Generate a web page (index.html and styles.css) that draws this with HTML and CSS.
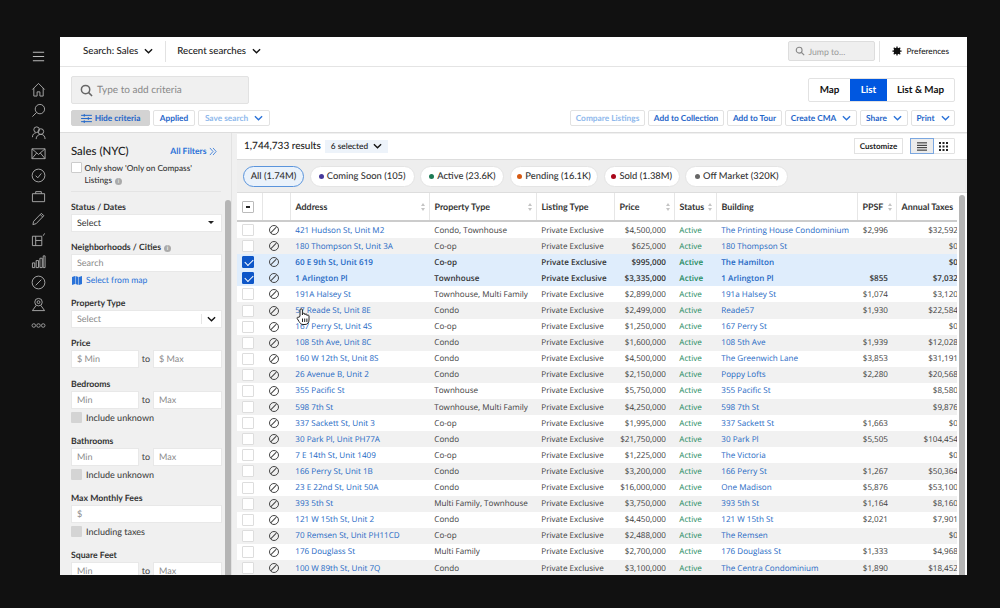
FILE: index.html
```html
<!DOCTYPE html>
<html lang="en">
<head>
<meta charset="utf-8">
<title>Search: Sales</title>
<link rel="stylesheet" href="styles.css">
</head>
<body>
<nav class="rail">
  <svg class="rail-ico menu" viewBox="0 0 16 16"><path d="M2 3.500h12M2 8h12M2 12.500h12"/></svg>
  <svg class="rail-ico home" viewBox="0 0 16 16"><path d="M1.500 8 8 1.500 14.500 8M3 6.500V15h3.500v-4.500h3V15H13V6.500"/></svg>
  <svg class="rail-ico" viewBox="0 0 16 16"><circle cx="9.500" cy="6.500" r="5"/><path d="M6 10 1.500 14.500"/></svg>
  <svg class="rail-ico" viewBox="0 0 16 16"><circle cx="6" cy="5" r="3"/><circle cx="10.500" cy="7" r="3"/><path d="M1.500 13c0-3 2-4.500 3.500-4.500M5.500 15c0-3 2.200-5 5-5s4.500 2 4.500 5"/></svg>
  <svg class="rail-ico" viewBox="0 0 16 16"><path d="M1 3h14v10.500H1zM1 3l7 6 7-6M1 13.500l5-6M15 13.500l-5-6"/></svg>
  <svg class="rail-ico" viewBox="0 0 16 16"><circle cx="8" cy="8" r="6.800"/><path d="M5 8.200 7.200 10.500 11 5.800"/></svg>
  <svg class="rail-ico" viewBox="0 0 16 16"><path d="M1.500 5h13v8.500h-13zM5 5V2.800h6V5"/></svg>
  <svg class="rail-ico" viewBox="0 0 16 16"><path d="M2 14.500 2.800 11 11 2.500l2.700 2.500L5.500 13.500zM9.800 3.800l2.700 2.600"/></svg>
  <svg class="rail-ico" viewBox="0 0 16 16"><path d="M1.500 4.500h10v10h-10zM5 4.500v10M5 9h6.500M13 4l1.500-2.500"/></svg>
  <svg class="rail-ico" viewBox="0 0 16 16"><path d="M1.500 9.500h2.500v5H1.500zM5.500 7H8v7.500H5.500zM9.500 4.500H12v10H9.500zM13 2h2v12.500h-2z"/></svg>
  <svg class="rail-ico" viewBox="0 0 16 16"><circle cx="8" cy="8" r="6.800"/><path d="M5 11 11 5"/></svg>
  <svg class="rail-ico" viewBox="0 0 16 16"><circle cx="8" cy="5.500" r="4"/><circle cx="8" cy="5.500" r="1.500"/><path d="M5.500 9 1.500 14.500h13L10.500 9"/></svg>
  <svg class="rail-ico dots" viewBox="0 0 16 16"><circle cx="3" cy="8" r="1.900"/><circle cx="8" cy="8" r="1.900"/><circle cx="13" cy="8" r="1.900"/></svg>
</nav>

<div class="app">
  <header class="topbar">
    <button class="top-menu">Search: Sales <svg class="chev" viewBox="0 0 10 6"><path d="M1 1l4 4 4-4"/></svg></button>
    <span class="top-sep"></span>
    <button class="top-menu">Recent searches <svg class="chev" viewBox="0 0 10 6"><path d="M1 1l4 4 4-4"/></svg></button>
    <span class="spacer"></span>
    <div class="jump"><svg class="jump-ico" viewBox="0 0 12 12"><circle cx="5" cy="5" r="3.500"/><path d="M7.500 7.500 11 11"/></svg>Jump to...</div>
    <span class="top-sep narrow"></span>
    <button class="prefs"><svg class="gear" viewBox="0 0 12 12"><circle cx="6" cy="6" r="3.200"/><path d="M6 .5v11M.5 6h11M2.100 2.100l7.800 7.800M9.900 2.100l-7.800 7.800"/></svg>Preferences</button>
  </header>

  <section class="criteria">
    <div class="crit-left">
      <div class="crit-search"><svg class="crit-ico" viewBox="0 0 14 14"><circle cx="6" cy="6" r="4.500"/><path d="M9.300 9.300 13 13"/></svg>Type to add criteria</div>
      <div class="crit-actions">
        <button class="btn hide"><svg class="sliders" viewBox="0 0 12 10"><path d="M0 1.500h12M0 5h12M0 8.500h12M3.500 0v3M8 3.500v3M3.500 7v3"/></svg>Hide criteria</button>
        <button class="btn b-applied">Applied</button>
        <button class="btn off wide">Save search <svg class="chev blue" viewBox="0 0 10 6"><path d="M1 1l4 4 4-4"/></svg></button>
      </div>
    </div>
    <div class="crit-right">
      <div class="views">
        <span class="view v-map">Map</span>
        <span class="view v-list">List</span>
        <span class="view v-both">List &amp; Map</span>
      </div>
      <div class="crit-actions tools">
        <button class="btn off b-compare">Compare Listings</button>
        <button class="btn b-coll">Add to Collection</button>
        <button class="btn b-tour">Add to Tour</button>
        <button class="btn b-cma">Create CMA <svg class="chev blue" viewBox="0 0 10 6"><path d="M1 1l4 4 4-4"/></svg></button>
        <button class="btn b-share">Share <svg class="chev blue" viewBox="0 0 10 6"><path d="M1 1l4 4 4-4"/></svg></button>
        <button class="btn b-print">Print <svg class="chev blue" viewBox="0 0 10 6"><path d="M1 1l4 4 4-4"/></svg></button>
      </div>
    </div>
  </section>

  <div class="main">
    <aside class="filters">
      <div class="f-head">
        <div class="f-title-row"><h2 class="f-title">Sales (NYC)</h2><a class="all-filters">All Filters <svg class="dbl" viewBox="0 0 9 9"><path d="M1 .5l3.500 4L1 8.500M4.500 .5l3.500 4-3.500 4"/></svg></a></div>
        <div class="only"><span class="check-box"></span><span class="only-text">Only show 'Only on Compass' Listings <i class="info">i</i></span></div>
      </div>
      <div class="f-scroll">
        <div class="f-body">
          <label class="f-label first">Status / Dates</label>
          <div class="field select">Select<span class="caret"></span></div>
          <label class="f-label">Neighborhoods / Cities <i class="info">i</i></label>
          <div class="field ph">Search</div>
          <a class="from-map"><svg class="map-ico" viewBox="0 0 10 9"><path d="M0 1l3-1v8L0 9zM3.500 0l3 1v8l-3-1zM7 1l3-1v8L7 9z"/></svg>Select from map</a>
          <label class="f-label">Property Type</label>
          <div class="field select ph">Select<span class="sep-chev"><svg class="chev" viewBox="0 0 10 6"><path d="M1 1l4 4 4-4"/></svg></span></div>
          <label class="f-label">Price</label>
          <div class="range"><div class="field ph">$ Min</div><span>to</span><div class="field ph">$ Max</div></div>
          <label class="f-label">Bedrooms</label>
          <div class="range"><div class="field ph">Min</div><span>to</span><div class="field ph">Max</div></div>
          <div class="inc"><span class="gray-box"></span>Include unknown</div>
          <label class="f-label">Bathrooms</label>
          <div class="range"><div class="field ph">Min</div><span>to</span><div class="field ph">Max</div></div>
          <div class="inc"><span class="gray-box"></span>Include unknown</div>
          <label class="f-label">Max Monthly Fees</label>
          <div class="field ph">$</div>
          <div class="inc"><span class="gray-box"></span>Including taxes</div>
          <label class="f-label">Square Feet</label>
          <div class="range"><div class="field ph">Min</div><span>to</span><div class="field ph">Max</div></div>
        </div>
        <div class="f-bar"></div>
      </div>
    </aside>

    <section class="results">
      <div class="res-head">
        <span class="res-count">1,744,733 results</span>
        <span class="selected">6 selected <svg class="chev" viewBox="0 0 10 6"><path d="M1 1l4 4 4-4"/></svg></span>
        <span class="spacer"></span>
        <button class="customize">Customize</button>
        <div class="toggle">
          <span class="tg on"><svg class="tg-ico" viewBox="0 0 11 9"><path d="M0 .5h11M0 3.200h11M0 5.800h11M0 8.500h11"/></svg></span>
          <span class="tg"><svg class="tg-grid" viewBox="0 0 9 9"><path d="M0 0h2v2H0zM3.500 0h2v2h-2zM7 0h2v2H7zM0 3.500h2v2H0zM3.500 3.500h2v2h-2zM7 3.500h2v2H7zM0 7h2v2H0zM3.500 7h2v2h-2zM7 7h2v2H7z"/></svg></span>
        </div>
      </div>
      <div class="chips">
        <span class="chip active c-all">All (1.74M)</span>
        <span class="chip c-soon"><i class="dot purple"></i>Coming Soon (105)</span>
        <span class="chip c-act"><i class="dot green"></i>Active (23.6K)</span>
        <span class="chip c-pend"><i class="dot orange"></i>Pending (16.1K)</span>
        <span class="chip c-sold"><i class="dot red"></i>Sold (1.38M)</span>
        <span class="chip c-off"><i class="dot grey"></i>Off Market (320K)</span>
      </div>
      <div class="table-wrap">
        <div class="table">
          <div class="thead">
            <div class="th th-check"><span class="minus-box"></span></div>
            <div class="th"></div>
            <div class="th sort">Address</div>
            <div class="th sort">Property Type</div>
            <div class="th">Listing Type</div>
            <div class="th sort">Price</div>
            <div class="th sort">Status</div>
            <div class="th">Building</div>
            <div class="th sort">PPSF</div>
            <div class="th">Annual Taxes</div>
          </div>
          <div class="tr"><span class="td c"><i class="cb"></i></span><span class="td c"><i class="no"></i></span><a class="td lnk">421 Hudson St, Unit M2</a><span class="td">Condo, Townhouse</span><span class="td">Private Exclusive</span><span class="td r">$4,500,000</span><span class="td act">Active</span><a class="td lnk">The Printing House Condominium</a><span class="td r">$2,996</span><span class="td r">$32,592</span></div>
          <div class="tr"><span class="td c"><i class="cb"></i></span><span class="td c"><i class="no"></i></span><a class="td lnk">180 Thompson St, Unit 3A</a><span class="td">Co-op</span><span class="td">Private Exclusive</span><span class="td r">$625,000</span><span class="td act">Active</span><a class="td lnk">180 Thompson St</a><span class="td r"></span><span class="td r">$0</span></div>
          <div class="tr sel"><span class="td c"><i class="cb on"></i></span><span class="td c"><i class="no"></i></span><a class="td lnk">60 E 9th St, Unit 619</a><span class="td">Co-op</span><span class="td">Private Exclusive</span><span class="td r">$995,000</span><span class="td act">Active</span><a class="td lnk">The Hamilton</a><span class="td r"></span><span class="td r">$0</span></div>
          <div class="tr sel"><span class="td c"><i class="cb on"></i></span><span class="td c"><i class="no"></i></span><a class="td lnk">1 Arlington Pl</a><span class="td">Townhouse</span><span class="td">Private Exclusive</span><span class="td r">$3,335,000</span><span class="td act">Active</span><a class="td lnk">1 Arlington Pl</a><span class="td r">$855</span><span class="td r">$7,032</span></div>
          <div class="tr"><span class="td c"><i class="cb"></i></span><span class="td c"><i class="no"></i></span><a class="td lnk">191A Halsey St</a><span class="td">Townhouse, Multi Family</span><span class="td">Private Exclusive</span><span class="td r">$2,899,000</span><span class="td act">Active</span><a class="td lnk">191a Halsey St</a><span class="td r">$1,074</span><span class="td r">$3,120</span></div>
          <div class="tr"><span class="td c"><i class="cb"></i></span><span class="td c"><i class="no"></i></span><a class="td lnk">57 Reade St, Unit 8E</a><span class="td">Condo</span><span class="td">Private Exclusive</span><span class="td r">$2,499,000</span><span class="td act">Active</span><a class="td lnk">Reade57</a><span class="td r">$1,930</span><span class="td r">$22,584</span></div>
          <div class="tr"><span class="td c"><i class="cb"></i></span><span class="td c"><i class="no"></i></span><a class="td lnk">167 Perry St, Unit 4S</a><span class="td">Co-op</span><span class="td">Private Exclusive</span><span class="td r">$1,250,000</span><span class="td act">Active</span><a class="td lnk">167 Perry St</a><span class="td r"></span><span class="td r">$0</span></div>
          <div class="tr"><span class="td c"><i class="cb"></i></span><span class="td c"><i class="no"></i></span><a class="td lnk">108 5th Ave, Unit 8C</a><span class="td">Condo</span><span class="td">Private Exclusive</span><span class="td r">$1,600,000</span><span class="td act">Active</span><a class="td lnk">108 5th Ave</a><span class="td r">$1,939</span><span class="td r">$12,028</span></div>
          <div class="tr"><span class="td c"><i class="cb"></i></span><span class="td c"><i class="no"></i></span><a class="td lnk">160 W 12th St, Unit 8S</a><span class="td">Condo</span><span class="td">Private Exclusive</span><span class="td r">$4,500,000</span><span class="td act">Active</span><a class="td lnk">The Greenwich Lane</a><span class="td r">$3,853</span><span class="td r">$31,191</span></div>
          <div class="tr"><span class="td c"><i class="cb"></i></span><span class="td c"><i class="no"></i></span><a class="td lnk">26 Avenue B, Unit 2</a><span class="td">Condo</span><span class="td">Private Exclusive</span><span class="td r">$2,150,000</span><span class="td act">Active</span><a class="td lnk">Poppy Lofts</a><span class="td r">$2,280</span><span class="td r">$20,568</span></div>
          <div class="tr"><span class="td c"><i class="cb"></i></span><span class="td c"><i class="no"></i></span><a class="td lnk">355 Pacific St</a><span class="td">Townhouse</span><span class="td">Private Exclusive</span><span class="td r">$5,750,000</span><span class="td act">Active</span><a class="td lnk">355 Pacific St</a><span class="td r"></span><span class="td r">$8,580</span></div>
          <div class="tr"><span class="td c"><i class="cb"></i></span><span class="td c"><i class="no"></i></span><a class="td lnk">598 7th St</a><span class="td">Townhouse, Multi Family</span><span class="td">Private Exclusive</span><span class="td r">$4,250,000</span><span class="td act">Active</span><a class="td lnk">598 7th St</a><span class="td r"></span><span class="td r">$9,876</span></div>
          <div class="tr"><span class="td c"><i class="cb"></i></span><span class="td c"><i class="no"></i></span><a class="td lnk">337 Sackett St, Unit 3</a><span class="td">Co-op</span><span class="td">Private Exclusive</span><span class="td r">$1,995,000</span><span class="td act">Active</span><a class="td lnk">337 Sackett St</a><span class="td r">$1,663</span><span class="td r">$0</span></div>
          <div class="tr"><span class="td c"><i class="cb"></i></span><span class="td c"><i class="no"></i></span><a class="td lnk">30 Park Pl, Unit PH77A</a><span class="td">Condo</span><span class="td">Private Exclusive</span><span class="td r">$21,750,000</span><span class="td act">Active</span><a class="td lnk">30 Park Pl</a><span class="td r">$5,505</span><span class="td r">$104,454</span></div>
          <div class="tr"><span class="td c"><i class="cb"></i></span><span class="td c"><i class="no"></i></span><a class="td lnk">7 E 14th St, Unit 1409</a><span class="td">Co-op</span><span class="td">Private Exclusive</span><span class="td r">$1,225,000</span><span class="td act">Active</span><a class="td lnk">The Victoria</a><span class="td r"></span><span class="td r">$0</span></div>
          <div class="tr"><span class="td c"><i class="cb"></i></span><span class="td c"><i class="no"></i></span><a class="td lnk">166 Perry St, Unit 1B</a><span class="td">Condo</span><span class="td">Private Exclusive</span><span class="td r">$3,200,000</span><span class="td act">Active</span><a class="td lnk">166 Perry St</a><span class="td r">$1,267</span><span class="td r">$50,364</span></div>
          <div class="tr"><span class="td c"><i class="cb"></i></span><span class="td c"><i class="no"></i></span><a class="td lnk">23 E 22nd St, Unit 50A</a><span class="td">Condo</span><span class="td">Private Exclusive</span><span class="td r">$16,000,000</span><span class="td act">Active</span><a class="td lnk">One Madison</a><span class="td r">$5,876</span><span class="td r">$53,100</span></div>
          <div class="tr"><span class="td c"><i class="cb"></i></span><span class="td c"><i class="no"></i></span><a class="td lnk">393 5th St</a><span class="td">Multi Family, Townhouse</span><span class="td">Private Exclusive</span><span class="td r">$3,750,000</span><span class="td act">Active</span><a class="td lnk">393 5th St</a><span class="td r">$1,164</span><span class="td r">$8,160</span></div>
          <div class="tr"><span class="td c"><i class="cb"></i></span><span class="td c"><i class="no"></i></span><a class="td lnk">121 W 15th St, Unit 2</a><span class="td">Condo</span><span class="td">Private Exclusive</span><span class="td r">$4,450,000</span><span class="td act">Active</span><a class="td lnk">121 W 15th St</a><span class="td r">$2,021</span><span class="td r">$7,901</span></div>
          <div class="tr"><span class="td c"><i class="cb"></i></span><span class="td c"><i class="no"></i></span><a class="td lnk">70 Remsen St, Unit PH11CD</a><span class="td">Co-op</span><span class="td">Private Exclusive</span><span class="td r">$2,488,000</span><span class="td act">Active</span><a class="td lnk">The Remsen</a><span class="td r"></span><span class="td r">$0</span></div>
          <div class="tr"><span class="td c"><i class="cb"></i></span><span class="td c"><i class="no"></i></span><a class="td lnk">176 Douglass St</a><span class="td">Multi Family</span><span class="td">Private Exclusive</span><span class="td r">$2,700,000</span><span class="td act">Active</span><a class="td lnk">176 Douglass St</a><span class="td r">$1,333</span><span class="td r">$4,968</span></div>
          <div class="tr"><span class="td c"><i class="cb"></i></span><span class="td c"><i class="no"></i></span><a class="td lnk">100 W 89th St, Unit 7Q</a><span class="td">Condo</span><span class="td">Private Exclusive</span><span class="td r">$3,100,000</span><span class="td act">Active</span><a class="td lnk">The Centra Condominium</a><span class="td r">$1,890</span><span class="td r">$18,452</span></div>
        </div>
        <div class="t-bar"></div>
      </div>
      <svg class="cursor" viewBox="0 0 14 17"><path d="M4 8V2a1.200 1.200 0 0 1 2.400 0v5l.3-1.200a1.100 1.100 0 0 1 2.100.3l.2.700a1 1 0 0 1 2 .2l.1.600a1 1 0 0 1 1.900.4V12c0 2.500-1.500 4.500-4 4.500H7c-2 0-3-1.500-4-3L1.200 10.500C.7 9.500 2 8.500 3 9.500z"/><path class="cursor-lines" d="M6.500 10.500v3.500M8.700 10.500v3.500M10.900 10.500v3.500"/></svg>
    </section>
  </div>
</div>
</body>
</html>
```
FILE: styles.css
```css
* { box-sizing: border-box; }
html, body { margin: 0; height: 100%; }
body {
  display: flex;
  width: 1000px;
  height: 608px;
  overflow: hidden;
  padding: 37px 33px 33px 0;
  background: #111;
  font-family: "Lato", "Open Sans", sans-serif;
  color: #222;
  text-rendering: geometricPrecision;
}
button { font-family: inherit; background: none; border: 0; padding: 0; margin: 0; text-rendering: inherit; }
i { font-style: normal; }
.spacer { flex: 1; }

.chev { width: 9px; height: 6px; fill: none; stroke: #111; stroke-width: 1.500; flex: none; }
.chev.blue { stroke: #2a72d8; }

/* rail */
.rail {
  width: 60px;
  flex: none;
  display: flex;
  flex-direction: column;
  align-items: center;
  gap: 6.500px;
  padding: 12px 0 0 17px;
}
.rail-ico { width: 15px; height: 15px; fill: none; stroke: #aaa; stroke-width: 1; flex: none; }
.rail-ico.menu { margin-bottom: 11px; stroke: #bbb; stroke-width: 1.200; }
.rail-ico.dots { stroke-width: .900; }

/* app */
.app {
  flex: 1;
  min-width: 0;
  background: #fff;
  display: flex;
  flex-direction: column;
  overflow: hidden;
}
.topbar {
  height: 30px;
  flex: none;
  display: flex;
  align-items: center;
  padding: 0 18px 1px 23px;
  border-bottom: 1px solid #e4e4e4;
}
.top-menu { display: flex; align-items: center; gap: 6px; font-size: 9.700px; font-weight: 500; color: #222; }
.top-sep { width: 1px; height: 21px; background: #e2e2e2; margin: 0 11px 0 12px; }
.top-sep.narrow { margin: 0 12px 0 4px; }
.jump {
  width: 87px;
  height: 20px;
  background: #efefef;
  border: 1px solid #ddd;
  border-radius: 2px;
  display: flex;
  align-items: center;
  gap: 3px;
  padding: 0 0 0 6px;
  font-size: 8.700px;
  color: #999;
}
.jump-ico { width: 10px; height: 10px; fill: none; stroke: #888; stroke-width: 1.300; }
.prefs { display: flex; align-items: center; gap: 4px; font-size: 8.200px; font-weight: 500; color: #222; }
.gear { width: 10px; height: 10px; fill: #111; stroke: #111; stroke-width: 1.500; }

/* criteria */
.criteria {
  height: 66px;
  flex: none;
  display: flex;
  justify-content: space-between;
  padding: 9px 12px 0 11px;
  border-bottom: 1px solid #ddd;
}
.crit-left, .crit-right { display: flex; flex-direction: column; }
.crit-right { align-items: flex-end; padding-top: 2px; }
.crit-search {
  width: 178px;
  height: 28px;
  background: #f0f0f0;
  border: 1px solid #e2e2e2;
  border-radius: 2px;
  display: flex;
  align-items: center;
  gap: 4px;
  padding-left: 8px;
  font-size: 10px;
  color: #888;
}
.crit-ico { width: 13px; height: 13px; fill: none; stroke: #666; stroke-width: 1.600; }
.crit-actions { display: flex; gap: 3px; margin-top: 6px; }
.crit-right .crit-actions { margin-top: 8px; }
.btn {
  height: 16px;
  padding: 0 6px;
  border: 1px solid #e2e2e2;
  border-radius: 2px;
  display: flex;
  align-items: center;
  justify-content: center;
  gap: 6px;
  font-size: 8.300px;
  font-weight: 700;
  color: #1f66c9;
  background: #fff;
  white-space: nowrap;
}
.btn.off { color: #8fb9ec; }
.btn.hide { background: #d3d3d3; border-color: #d3d3d3; gap: 3px; width: 79px; padding: 0; }
.btn.wide { width: 72px; }
.b-applied { width: 42px; padding: 0; }
.b-compare { width: 75px; }
.b-coll { width: 76px; }
.b-tour { width: 55px; padding: 0; }
.b-cma { width: 72px; }
.b-share { width: 48px; }
.b-print { width: 44px; }
.sliders { width: 11px; height: 9px; fill: none; stroke: #1f66c9; stroke-width: 1.100; }
.views { display: flex; height: 24px; border: 1px solid #e2e2e2; border-radius: 2px; }
.view { display: flex; align-items: center; justify-content: center; font-size: 9.800px; font-weight: 700; color: #111; }
.v-map { width: 41px; }
.v-list { width: 37px; background: #0057e0; color: #fff; }
.v-both { width: 67px; }

/* main */
.main { flex: 1; min-height: 0; display: flex; }
.filters {
  width: 172px;
  flex: none;
  background: #f0f0f0;
  display: flex;
  flex-direction: column;
  overflow: hidden;
  border-right: 1px solid #e2e2e2;
}
.f-head { margin: 0 10px 0 11px; height: 59px; padding-top: 11px; border-bottom: 1px solid #e4e4e4; flex: none; }
.f-title-row { display: flex; justify-content: space-between; align-items: center; height: 14px; }
.f-title { margin: 0; font-size: 11.400px; font-weight: 500; color: #222; }
.all-filters { display: flex; align-items: center; gap: 2.500px; font-size: 8.600px; font-weight: 700; color: #2a72d8; padding-right: 4px; }
.dbl { width: 8px; height: 9px; fill: none; stroke: #2a72d8; stroke-width: .900; }
.only { display: flex; gap: 2px; margin-top: 4px; font-size: 8.250px; font-weight: 500; color: #333; line-height: 12px; }
.check-box { width: 11px; height: 11px; flex: none; background: #fff; border: 1px solid #ccc; border-radius: 1px; }
.only-text { width: 122px; padding-left: .500px; }
.info {
  display: inline-block;
  width: 7px;
  height: 7px;
  border-radius: 50%;
  background: #aaa;
  color: #f0f0f0;
  font-size: 6px;
  line-height: 7px;
  text-align: center;
  vertical-align: 0;
  margin-left: 1px;
}
.f-scroll { flex: 1; min-height: 0; display: flex; overflow: hidden; padding-left: 11px; }
.f-body { width: 151px; flex: none; }
.f-bar { width: 6px; height: 376px; margin: 8px 0 0 3px; background: #b5b5b5; border-radius: 3px 3px 0 0; flex: none; }
.f-label { display: block; margin: 8px 0 1px; font-size: 8.700px; font-weight: 700; color: #333; line-height: 13px; }
.f-label.first { margin-top: 7.500px; }
.field {
  height: 18px;
  background: #fff;
  border: 1px solid #e8e8e8;
  font-size: 9px;
  display: flex;
  align-items: center;
  padding-left: 5px;
  color: #333;
}
.field.ph { color: #8a8a8a; }
.select { justify-content: space-between; padding-right: 5px; }
.caret { width: 0; height: 0; border: 3px solid transparent; border-top: 3px solid #222; border-bottom: 0; margin-right: 2px; }
.sep-chev { display: flex; align-items: center; height: 10px; border-left: 1px solid #e5e5e5; padding: 0 0 0 5px; }
.from-map { display: flex; align-items: center; gap: 4px; height: 17px; font-size: 8.600px; color: #2a72d8; padding-left: 1px; }
.from-map + .f-label { margin-top: 7px; }
.map-ico { width: 10px; height: 9px; fill: #2a72d8; }
.range { display: grid; grid-template-columns: 68px 1fr 69px; align-items: center; text-align: center; font-size: 9px; color: #444; }
.range + .f-label { margin-top: 9px; }
.inc { display: flex; align-items: center; gap: 4px; height: 11px; margin: 3px 0 0; font-size: 9px; font-weight: 500; color: #444; }
.gray-box { width: 11px; height: 11px; background: #d4d4d4; border-radius: 1px; flex: none; }
.inc + .f-label { margin-top: 11px; }

/* results */
.results {
  flex: 1;
  min-width: 0;
  display: flex;
  flex-direction: column;
  border-left: 5px solid #f0f0f0;
  position: relative;
  border-top: 1px solid #f0f0f0;
}
.res-head {
  height: 26px;
  flex: none;
  display: flex;
  align-items: center;
  padding: 0 12px 1px 7px;
  border-bottom: 1px solid #ddd;
}
.res-count { font-size: 10px; font-weight: 500; color: #222; }
.selected {
  margin-left: 4px;
  width: 63px;
  height: 13px;
  background: #edf3fa;
  display: flex;
  align-items: center;
  gap: 5px;
  padding-left: 6px;
  font-size: 8.300px;
  font-weight: 500;
  color: #222;
}
.customize { width: 49px; height: 16px; border: 1px solid #e2e2e2; background: #fff; font-size: 8px; font-weight: 700; color: #222; }
.toggle { margin-left: 7px; display: flex; width: 45px; height: 16px; border: 1px solid #e2e2e2; border-radius: 1px; }
.tg { width: 22px; display: flex; align-items: center; justify-content: center; }
.tg.on { background: #ececec; outline: 1px solid #7ba7e0; }
.tg-ico { width: 10px; height: 9px; fill: none; stroke: #111; stroke-width: 1; }
.tg-grid { width: 9px; height: 9px; fill: #222; }
.chips {
  height: 33px;
  flex: none;
  display: flex;
  align-items: center;
  gap: 5.700px;
  padding: 0 0 0 6px;
  background: #eee;
  border-bottom: 1px solid #ddd;
}
.chip {
  height: 21px;
  background: #fff;
  border: 1px solid #e4e4e4;
  border-radius: 11px;
  display: flex;
  align-items: center;
  justify-content: center;
  gap: 3px;
  font-size: 9.400px;
  font-weight: 500;
  color: #333;
  white-space: nowrap;
}
.chip.active { background: #eaf2fb; border-color: #5a94dc; }
.c-all { width: 61px; }
.c-soon { width: 105px; }
.c-act { width: 84px; }
.c-pend { width: 88px; }
.c-sold { width: 76px; }
.c-off { width: 102.500px; }
.dot { width: 5px; height: 5px; border-radius: 50%; flex: none; }
.purple { background: #46399b; }
.green { background: #1d7a55; }
.orange { background: #d65a12; }
.red { background: #a9061a; }
.grey { background: #666; }

/* table */
.table-wrap { flex: 1; min-height: 0; display: flex; overflow: hidden; }
.table { width: 720px; flex: none; overflow: hidden; }
.thead, .tr { display: grid; grid-template-columns: 25px 28px 139px 107px 78px 60px 42px 141px 39px 62px; width: 721px; }
.thead { height: 29px; border-bottom: 2px solid #ccc; }
.th {
  display: flex;
  align-items: center;
  padding-left: 4.500px;
  border-left: 1px solid #e6e6e6;
  font-size: 8.900px;
  font-weight: 700;
  color: #333;
  white-space: nowrap;
  position: relative;
}
.th:first-child { border-left: 0; }
.sort::before, .sort::after {
  content: "";
  position: absolute;
  right: 4px;
  width: 0;
  height: 0;
  border: 2.500px solid transparent;
}
.sort::before { top: 10px; border-top: 0; border-bottom: 3px solid #c4c4c4; }
.sort::after { top: 15px; border-bottom: 0; border-top: 3px solid #c4c4c4; }
.minus-box { width: 12px; height: 12px; border: 1px solid #bbb; border-radius: 1px; background: #fff; position: relative; }
.minus-box::after { content: ""; position: absolute; left: 3px; top: 4.500px; width: 4px; height: 1.500px; background: #222; }
.tr { height: 16.100px; font-family: "Open Sans", sans-serif; font-size: 8.100px; color: #3c3c3c; }
.tr:nth-child(odd) { background: #f1f1f1; }
.tr.sel { background: #dfedfc; font-weight: 600; color: #333; }
.td { display: flex; align-items: center; padding-left: 5.300px; white-space: nowrap; overflow: hidden; min-width: 0; }
.td.c { padding: 0; justify-content: center; }
.td.r { justify-content: flex-end; padding: 0 8px 0 0; }
.td.r:last-child { padding-right: 0; }
.td.lnk { color: #2468c4; }
.td.act { color: #1d8a5e; }
.cb { display: block; width: 12px; height: 12px; background: #fff; border: 1px solid #ddd; border-radius: 1px; position: relative; margin-left: -3px; }
.cb.on { background: #0d56c8; border-color: #0d56c8; }
.cb.on::after {
  content: "";
  position: absolute;
  left: 1.500px;
  top: 2px;
  width: 7px;
  height: 4px;
  border-left: 1.500px solid #fff;
  border-bottom: 1.500px solid #fff;
  transform: rotate(-45deg);
}
.no { display: block; width: 10px; height: 10px; border: 1.200px solid #444; border-radius: 50%; position: relative; margin-left: -5px; }
.no::after { content: ""; position: absolute; left: 3.300px; top: 0; width: 1.100px; height: 8px; background: #444; transform: rotate(45deg); }
.t-bar { width: 6px; margin-left: 2px; margin-top: 2px; background: #b5b5b5; border-radius: 3px 3px 0 0; flex: none; }
.cursor {
  position: absolute;
  left: 59px;
  top: 174px;
  width: 14px;
  height: 17px;
  fill: #fff;
  stroke: #222;
  stroke-width: 1;
}
.cursor-lines { fill: none; }
```
